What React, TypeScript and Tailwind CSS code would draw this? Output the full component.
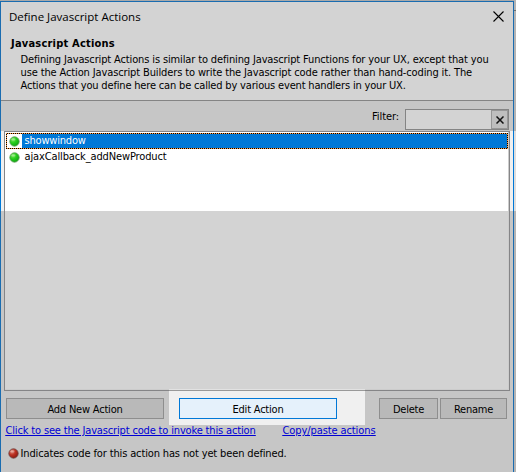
import type { ReactNode } from "react";

function Dot({ tone }: { tone: "green" | "red" }) {
  const c = tone === "green" ? ["#7be85c", "#25cc1c", "#10a512", "#5a9a56"] : ["#e08c7c", "#bb3022", "#8a1a12", "#6d4644"];
  return (
    <svg className="block h-[11px] w-[11px] shrink-0" viewBox="0 0 11 11">
      <defs>
        <radialGradient id={tone} cx="0.34" cy="0.28" r="0.75">
          <stop offset="0" stopColor={c[0]} />
          <stop offset="0.5" stopColor={c[1]} />
          <stop offset="1" stopColor={c[2]} />
        </radialGradient>
      </defs>
      <circle cx="5.5" cy="5.5" r="4.7" fill={`url(#${tone})`} stroke={c[3]} strokeWidth="0.8" />
      <ellipse cx="4.3" cy="3.4" rx="2" ry="1.2" fill="#fff" opacity="0.3" />
    </svg>
  );
}

function Button({ className, children }: { className: string; children: ReactNode }) {
  return (
    <button className={`flex h-[21px] items-start justify-center whitespace-nowrap border pt-[4px] leading-[13px] ${className}`}>
      {children}
    </button>
  );
}

export default function App() {
  return (
    <div className="flex h-[472px] w-[516px] overflow-hidden bg-[#c6c6c6] font-['DejaVu_Sans_Condensed','DejaVu_Sans',sans-serif] text-[11px] leading-[13px] text-black">
      <div className="flex h-full w-[514px] flex-col border-t border-[#a9a9a9]">
        <div className="flex flex-1 flex-col bg-[linear-gradient(#1a6cb0_130px,#0078d7_130px,#0078d7_210px,#1a6cb0_210px)] px-px pt-px">
          <header className="h-[98px] shrink-0 bg-[#d3d3d3]">
            <div className="flex justify-between pl-[8px] pr-[9px] pt-[7px]">
              <h1 className="h-[16px] whitespace-nowrap font-['Open_Sans',sans-serif] text-[11.5px] leading-[16px]">Define Javascript Actions</h1>
              <svg className="mt-[2px] h-[11px] w-[11px]" viewBox="0 0 11 11" stroke="#000" strokeWidth="1.1">
                <path d="M.5.5l10 10M10.500.5l-10 10" />
              </svg>
            </div>
            <h2 className="ml-[10px] mt-[12px] whitespace-nowrap font-bold tracking-[0.21px]">Javascript Actions</h2>
            <div className="ml-[19.5px] mt-[3px] whitespace-nowrap">
              <p className="tracking-[-0.135px]">Defining Javascript Actions is similar to defining Javascript Functions for your UX, except that you</p>
              <p className="tracking-[-0.125px]">use the Action Javascript Builders to write the Javascript code rather than hand-coding it. The</p>
              <p className="tracking-[-0.174px]">Actions that you define here can be called by various event handlers in your UX.</p>
            </div>
          </header>

          <div className="flex h-[31px] shrink-0 justify-end border-t border-[#848484] bg-[#c6c6c6] pr-[4px] pt-[8px]">
            <label className="mr-[6px] mt-[1px] tracking-[-0.08px]">Filter:</label>
            <div className="flex h-[21px] w-[104px] border border-[#848484] bg-[#d3d3d3]">
              <div className="flex-1" />
              <button className="flex w-[17px] items-center justify-center border border-[#969696] bg-[#bebebe]">
                <svg className="h-[8px] w-[8px]" viewBox="0 0 8 8" stroke="#111" strokeWidth="1.5">
                  <path d="M.5.5l7 7M7.500.5l-7 7" />
                </svg>
              </button>
            </div>
          </div>

          <div className="h-[260px] shrink-0 bg-[linear-gradient(#f0f0f0_80px,#c6c6c6_80px)] px-[3px]">
            <div className="h-[260px] w-[506px] border border-[#858587] bg-[linear-gradient(#fff_79px,#d3d3d3_79px)] px-px pt-px shadow-[inset_-1px_-1px_0_#cccccc]">
              <div className="h-[16px] w-[502px] bg-[repeating-conic-gradient(#000_0_25%,#ff9a40_0_50%)] bg-[length:2px_2px] p-px">
                <div className="flex h-[14px] bg-[#0078d7]">
                  <div className="flex h-[14px] w-[15px] items-center bg-white pl-[2px]"><Dot tone="green" /></div>
                  <span className="ml-[2.5px] tracking-[-0.2px] text-white">showwindow</span>
                </div>
              </div>
              <div className="flex h-[16px] items-center pl-[3px]">
                <Dot tone="green" />
                <span className="-mt-px ml-[4.5px] tracking-[-0.13px]">ajaxCallback_addNewProduct</span>
              </div>
            </div>
          </div>

          <div className="flex h-[33px] shrink-0 bg-[#c6c6c6] pl-[5px] pt-[7px]">
            <Button className="w-[158px] border-[#8e8e8e] bg-[#b9b9b9] tracking-[-0.2px]">Add New Action</Button>
            <div className="relative -mt-[9px] ml-[5px] h-[36px] w-[196px] bg-[#f0f0f0] bg-[linear-gradient(#e2e2e2_1px,#999_1px,#999_2px,#f0f0f0_2px)] pl-[10px] pt-[9px]">
              <Button className="w-[158px] border-[#0078d7] bg-[#e5f1fb] tracking-[-0.2px]">Edit Action</Button>
            </div>
            <Button className="ml-[14px] w-[59px] border-[#8e8e8e] bg-[#b9b9b9] tracking-[-0.25px]">Delete</Button>
            <Button className="ml-[2px] w-[67px] border-[#8e8e8e] bg-[#b9b9b9] tracking-[-0.25px]">Rename</Button>
          </div>
          <div className="flex flex-1 flex-col bg-[#c6c6c6]">
            <div className="relative flex h-[23px] shrink-0 whitespace-nowrap pl-[4.5px] text-[#0000d4] underline">
              <a className="w-[277px] tracking-[-0.157px]">Click to see the Javascript code to invoke this action</a>
              <a className="tracking-[-0.094px]">Copy/paste actions</a>
            </div>
            <div className="flex pl-[7px]">
              <span className="mt-px"><Dot tone="red" /></span>
              <span className="ml-[1.5px] whitespace-nowrap tracking-[-0.137px]">Indicates code for this action has not yet been defined.</span>
            </div>
          </div>
        </div>
      </div>
      <div className="flex w-[2px] flex-col bg-[#b4b4b4]">
        <div className="h-[11px] border-b border-[#6e6e6e]" />
        <div className="h-[120px]" />
        <div className="h-[80px] bg-[#dedede]" />
      </div>
    </div>
  );
}
